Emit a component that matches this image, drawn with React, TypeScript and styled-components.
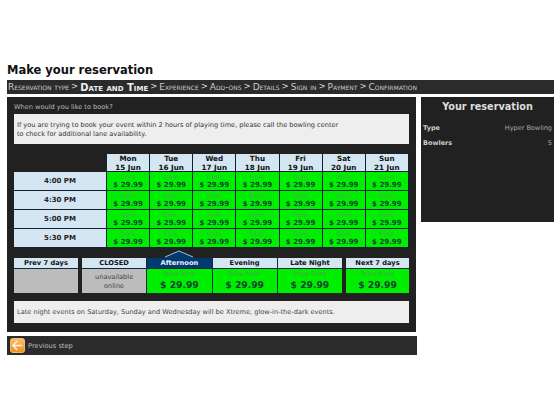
import React from "react";
import styled, { createGlobalStyle } from "styled-components";

const Global = createGlobalStyle`
  html, body {
    margin: 0;
    background: #fff;
    font-family: "DejaVu Sans", Verdana, sans-serif;
  }
  * { box-sizing: border-box; }
`;

const Page = styled.div`
  width: 560px;
  height: 420px;
  padding: 63px 6px 0 7px;
  overflow: hidden;
`;

const Title = styled.h1`
  margin: 0;
  height: 17px;
  font-size: 11.5px;
  line-height: 15px;
  font-weight: bold;
  color: #111;
`;

const StepBar = styled.div`
  height: 14px;
  background: #2b2b2b;
  display: flex;
  align-items: center;
  padding-left: 1px;
  gap: 2px;
  white-space: nowrap;
`;

const Step = styled.span<{ $current?: boolean }>`
  font-variant: small-caps;
  font-size: ${(p) => (p.$current ? "10px" : "9px")};
  font-weight: ${(p) => (p.$current ? "bold" : "normal")};
  color: ${(p) => (p.$current ? "#eee" : "#ccc")};
`;

const Sep = styled.span`
  font-size: 8.5px;
  color: #ddd;
  position: relative;
  top: -1px;
`;

const Columns = styled.div`
  display: flex;
  align-items: flex-start;
  gap: 4px;
  margin-top: 3px;
`;

const Left = styled.div`
  width: 410px;
`;

const MainPanel = styled.div`
  height: 235px;
  width: 409px;
  background: #212121;
  padding: 3px 7px 0 7px;
`;

const Question = styled.div`
  height: 14px;
  font-size: 6.6px;
  line-height: 14px;
  color: #bbb;
`;

const Note = styled.div<{ $h: number }>`
  width: 395px;
  height: ${(p) => p.$h}px;
  background: #eeeeee;
  color: #333;
  font-size: 6.6px;
  line-height: 9px;
  display: flex;
  align-items: center;
  padding: 1px 3px 0;
`;

const Grid = styled.div`
  display: grid;
  grid-template-columns: 93px repeat(7, 43.14px);
  grid-template-rows: 18px repeat(4, 19px);
  margin-top: 10px;
  background: #0f2a3f;
  width: 395px;
  & > * { border-right: 1px solid #123; border-bottom: 1px solid #123; }
`;

const Corner = styled.div`
  background: #212121;
  border: 0;
`;

const DayHead = styled.div`
  background: #d5e6f3;
  color: #111;
  font-size: 7.2px;
  font-weight: bold;
  line-height: 8.5px;
  text-align: center;
  padding-top: 1px;
`;

const TimeCell = styled.div`
  background: #d5e6f3;
  color: #222;
  font-size: 7px;
  font-weight: bold;
  display: flex;
  align-items: center;
  justify-content: center;
`;

const PriceCell = styled.div`
  background: #00ee00;
  text-align: center;
  padding-top: 1px;
`;

const From = styled.div`
  font-size: 6.3px;
  line-height: 8px;
  color: #55a855;
`;

const Amount = styled.div`
  font-size: 7px;
  line-height: 9px;
  font-weight: bold;
  color: #143;
`;

const TabRow = styled.div`
  display: flex;
  margin-top: 10px;
  width: 395px;
  height: 35px;
`;

const TabGroup = styled.div`
  display: flex;
  margin: 0 4px;
  flex: 1;
  background: #0f2a3f;
  gap: 1px;
`;

const Tab = styled.div<{ $w?: number }>`
  width: ${(p) => (p.$w ? `${p.$w}px` : "auto")};
  flex: ${(p) => (p.$w ? "none" : 1)};
  background: #0f2a3f;
  position: relative;
  display: flex;
  flex-direction: column;
`;

const TabHead = styled.div<{ $active?: boolean }>`
  height: 10px;
  background: ${(p) => (p.$active ? "#003a70" : "#d5e6f3")};
  color: ${(p) => (p.$active ? "#e8f2fa" : "#111")};
  font-size: 6.7px;
  line-height: 10px;
  font-weight: bold;
  text-align: center;
`;

const TabBody = styled.div<{ $open?: boolean }>`
  flex: 1;
  margin-top: 1px;
  background: ${(p) => (p.$open ? "#00ee00" : "#bcbcbc")};
  text-align: center;
`;

const TabFrom = styled.div`
  font-size: 6.4px;
  line-height: 9px;
  margin-top: 1px;
  color: #4aa34a;
`;

const TabPrice = styled.div`
  font-size: 9.2px;
  line-height: 12px;
  font-weight: bold;
  color: #143;
`;

const Unavailable = styled.div`
  font-size: 6.6px;
  line-height: 8.5px;
  padding-top: 4px;
  color: #444;
`;

const Notch = styled.svg`
  position: absolute;
  top: -8px;
  left: 16px;
`;

const LastNote = styled(Note)`
  margin-top: 8px;
  color: #444;
`;

const Footer = styled.div`
  height: 19px;
  width: 410px;
  margin-top: 4px;
  background: #2b2b2b;
  display: flex;
  align-items: center;
  gap: 3px;
  padding-left: 3px;
  font-size: 6.7px;
  color: #bbb;
`;

const Side = styled.div`
  width: 133px;
  height: 125px;
  background: #212121;
  padding: 0 2px;
  color: #aaa;
`;

const SideTitle = styled.div`
  height: 24px;
  font-size: 9.7px;
  line-height: 19px;
  font-weight: bold;
  text-align: center;
  color: #ddd;
`;

const SideRow = styled.div`
  display: flex;
  justify-content: space-between;
  height: 15px;
  line-height: 15px;
  font-size: 6.5px;
`;

const SideKey = styled.span`
  font-weight: bold;
  color: #ccc;
`;

const days = [
  ["Mon", "15 Jun"],
  ["Tue", "16 Jun"],
  ["Wed", "17 Jun"],
  ["Thu", "18 Jun"],
  ["Fri", "19 Jun"],
  ["Sat", "20 Jun"],
  ["Sun", "21 Jun"],
];
const times = ["4:00 PM", "4:30 PM", "5:00 PM", "5:30 PM"];
const steps = ["Reservation type", "Date and Time", "Experience", "Add-ons", "Details", "Sign in", "Payment", "Confirmation"];

function BackIcon() {
  return (
    <svg width="15" height="15" viewBox="0 0 16 16">
      <defs>
        <linearGradient id="back" x1="0" y1="0" x2="0" y2="1">
          <stop offset="0" stopColor="#f8c070" />
          <stop offset="1" stopColor="#ee8f20" />
        </linearGradient>
      </defs>
      <rect x="0.5" y="0.5" width="15" height="15" rx="2.5" fill="url(#back)" stroke="#f7c27a" />
      <path d="M7.5 3.5 L3 8 L7.5 12.5 M3 8 H13" fill="none" stroke="#fff3dd" strokeWidth="1.6" />
    </svg>
  );
}

function PriceTab({ name, w, active }: { name: string; w?: number; active?: boolean }) {
  return (
    <Tab $w={w}>
      {active && (
        <Notch width="32" height="8" viewBox="0 0 32 8">
          <path d="M0 8 L16 1 L32 8 Z" fill="#003a70" />
          <path d="M2 7 L16 1 L30 7" fill="none" stroke="#cfe0ee" strokeWidth="0.8" />
        </Notch>
      )}
      <TabHead $active={active}>{name}</TabHead>
      <TabBody $open>
        <TabFrom>Price from</TabFrom>
        <TabPrice>$ 29.99</TabPrice>
      </TabBody>
    </Tab>
  );
}

export default function App() {
  return (
    <Page>
      <Global />
      <Title>Make your reservation</Title>
      <StepBar>
        {steps.map((s, i) => (
          <React.Fragment key={s}>
            {i > 0 && <Sep>&gt;</Sep>}
            <Step $current={i === 1}>{s}</Step>
          </React.Fragment>
        ))}
      </StepBar>
      <Columns>
        <Left>
          <MainPanel>
            <Question>When would you like to book?</Question>
            <Note $h={30}>
              <span>
                If you are trying to book your event within 2 hours of playing time, please call the bowling center
                <br />
                to check for additional lane availability.
              </span>
            </Note>
            <Grid>
              <Corner />
              {days.map(([d, date]) => (
                <DayHead key={d}>
                  {d}
                  <br />
                  {date}
                </DayHead>
              ))}
              {times.map((t) => (
                <React.Fragment key={t}>
                  <TimeCell>{t}</TimeCell>
                  {days.map(([d]) => (
                    <PriceCell key={d}>
                      <From>from</From>
                      <Amount>$ 29.99</Amount>
                    </PriceCell>
                  ))}
                </React.Fragment>
              ))}
            </Grid>
            <TabRow>
              <Tab $w={64}>
                <TabHead>Prev 7 days</TabHead>
                <TabBody />
              </Tab>
              <TabGroup>
                <Tab>
                  <TabHead>CLOSED</TabHead>
                  <TabBody>
                    <Unavailable>
                      unavailable
                      <br />
                      online
                    </Unavailable>
                  </TabBody>
                </Tab>
                <PriceTab name="Afternoon" active />
                <PriceTab name="Evening" />
                <PriceTab name="Late Night" />
              </TabGroup>
              <PriceTab name="Next 7 days" w={63} />
            </TabRow>
            <LastNote $h={22}>Late night events on Saturday, Sunday and Wednesday will be Xtreme, glow-in-the-dark events.</LastNote>
          </MainPanel>
          <Footer>
            <BackIcon />
            Previous step
          </Footer>
        </Left>
        <Side>
          <SideTitle>Your reservation</SideTitle>
          <SideRow>
            <SideKey>Type</SideKey>
            <span>Hyper Bowling</span>
          </SideRow>
          <SideRow>
            <SideKey>Bowlers</SideKey>
            <span>5</span>
          </SideRow>
        </Side>
      </Columns>
    </Page>
  );
}
